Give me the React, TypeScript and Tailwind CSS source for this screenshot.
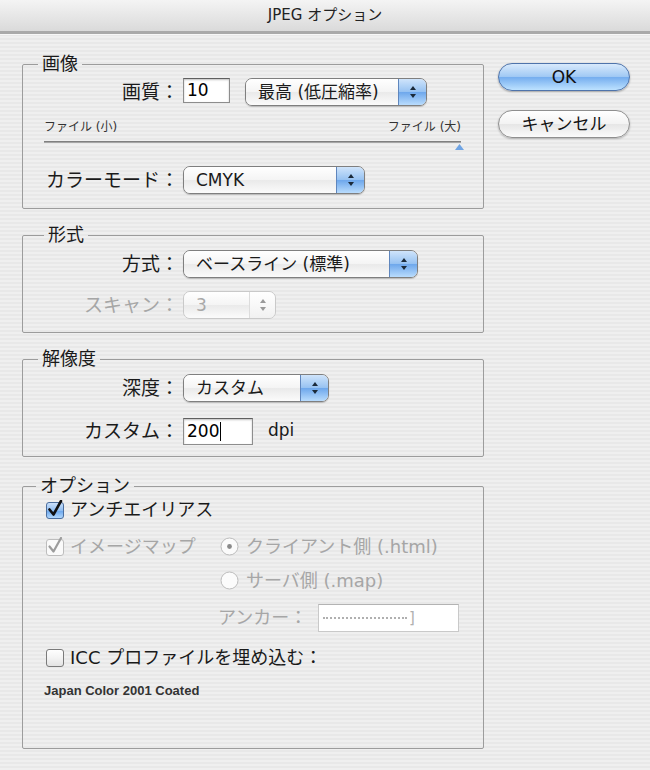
import React from "react";

const font = "font-['DejaVu_Sans','Noto_Sans_CJK_JP',sans-serif]";

function Arrows({ dim }: { dim?: boolean }) {
  const c = dim ? "#9a9a9a" : "#1b2a3a";
  return (
    <svg width="8" height="14" viewBox="0 0 8 14">
      <polygon points="4,1 7,5 1,5" fill={c} />
      <polygon points="1,9 7,9 4,13" fill={c} />
    </svg>
  );
}

function Popup({ text, w, disabled }: { text: string; w: string; disabled?: boolean }) {
  return (
    <div
      className={`flex h-[28px] ${w} overflow-hidden rounded-[7px] border ${
        disabled ? "border-[#c9c9c9] text-[#a8a8a8]" : "border-[#7f7f7f] text-[#1a1a1a] shadow-[0_1px_1px_rgba(0,0,0,0.2)]"
      }`}
    >
      <div className="flex flex-1 items-center bg-[linear-gradient(#ffffff,#f4f4f4_50%,#eaeaea_52%,#fbfbfb)] pl-[12px] text-[17px] leading-none">
        {text}
      </div>
      {disabled ? (
        <div className="flex w-[26px] items-center justify-center border-l border-[#dcdcdc] bg-[linear-gradient(#ffffff,#f1f1f1)]">
          <Arrows dim />
        </div>
      ) : (
        <div className="flex w-[28px] items-center justify-center border-l border-[#5f86bd] bg-[linear-gradient(#cfe4fb,#98c3f2_48%,#6fa8ec_52%,#b9dcfd)]">
          <Arrows />
        </div>
      )}
    </div>
  );
}

function Label({ text, dim }: { text: string; dim?: boolean }) {
  return (
    <div className={`h-[28px] w-[156px] text-right text-[19px] leading-[28px] ${dim ? "text-[#a6a6a6]" : "text-[#1a1a1a]"}`}>
      {text}
    </div>
  );
}

function TextField({ value, w, h, caret }: { value: string; w: string; h: string; caret?: boolean }) {
  return (
    <div
      className={`flex ${w} ${h} items-center border border-[#8d8d8d] border-t-[#5f5f5f] bg-white pl-[3px] text-[17px] leading-none text-black shadow-[inset_0_1px_2px_rgba(0,0,0,0.25)]`}
    >
      {value}
      {caret && <span className="ml-[1px] h-[19px] w-[1px] bg-black" />}
    </div>
  );
}

function CheckBox({ checked, dim }: { checked?: boolean; dim?: boolean }) {
  if (checked && !dim) {
    return (
      <svg width="19" height="19" viewBox="0 0 19 19" className="shrink-0">
        <defs>
          <linearGradient id="cb" x1="0" y1="0" x2="0" y2="1">
            <stop offset="0" stopColor="#cfe3fb" />
            <stop offset="0.5" stopColor="#8fbdf1" />
            <stop offset="0.52" stopColor="#6aa5ec" />
            <stop offset="1" stopColor="#b6dbfd" />
          </linearGradient>
        </defs>
        <rect x="0.5" y="2.5" width="17" height="16" rx="2.5" fill="url(#cb)" stroke="#4b6e9e" />
        <path d="M3.5 9.5 L7.5 14.5 L15 1" fill="none" stroke="#111" strokeWidth="2.6" strokeLinecap="round" strokeLinejoin="round" />
      </svg>
    );
  }
  if (checked && dim) {
    return (
      <svg width="19" height="19" viewBox="0 0 19 19" className="shrink-0">
        <rect x="0.5" y="2.5" width="17" height="16" rx="2.5" fill="#fafafa" stroke="#bdbdbd" />
        <path d="M3.5 9.5 L7.5 14.5 L15 1" fill="none" stroke="#9c9c9c" strokeWidth="2.2" strokeLinecap="round" strokeLinejoin="round" />
      </svg>
    );
  }
  return (
    <svg width="19" height="19" viewBox="0 0 19 19" className="shrink-0">
      <defs>
        <linearGradient id="cu" x1="0" y1="0" x2="0" y2="1">
          <stop offset="0" stopColor="#ffffff" />
          <stop offset="0.5" stopColor="#f3f3f3" />
          <stop offset="1" stopColor="#e2e2e2" />
        </linearGradient>
      </defs>
      <rect x="0.5" y="1.5" width="17" height="17" rx="2.5" fill="url(#cu)" stroke="#7a7a7a" />
    </svg>
  );
}

function Radio({ selected }: { selected?: boolean }) {
  return (
    <svg width="19" height="19" viewBox="0 0 19 19" className="shrink-0">
      <circle cx="9.5" cy="9.5" r="8.5" fill="#fbfbfb" stroke="#bcbcbc" />
      {selected && <circle cx="9.5" cy="9.5" r="2.4" fill="#8a8a8a" />}
    </svg>
  );
}

export default function App() {
  return (
    <div
      className={`h-[770px] w-[650px] overflow-hidden bg-[repeating-linear-gradient(180deg,#efefef_0px,#efefef_2px,#e8e8e8_2px,#e8e8e8_4px)] ${font} text-[#1a1a1a]`}
    >
      {/* Title bar */}
      <div className="h-[31px] bg-[linear-gradient(#f4f4f4,#dadada)] text-center text-[15px] leading-[31px] text-[#222]">
        JPEG オプション
      </div>
      <div className="h-[3px] bg-[#a9a9a9]" />
      <div className="h-[1px] bg-[#f7f7f7]" />

      <div className="flex">
        {/* Left column: groups */}
        <div className="ml-[22px] mt-[19px] flex w-[462px] flex-col">
          {/* 画像 */}
          <fieldset className="h-[155px] rounded-[2px] border border-[#9c9c9c]">
            <legend className="ml-[15px] px-[4px] text-[18px] leading-[20px]">画像</legend>
            <div className="mt-[4px] flex items-start">
              <Label text="画質：" />
              <div className="ml-[4px]">
                <TextField value="10" w="w-[47px]" h="h-[25px]" />
              </div>
              <div className="ml-[15px]">
                <Popup text="最高 (低圧縮率)" w="w-[182px]" />
              </div>
            </div>
            <div className="ml-[21px] mr-[22px] mt-[15px] flex justify-between text-[12px] leading-[13px] text-[#333]">
              <span>ファイル (小)</span>
              <span>ファイル (大)</span>
            </div>
            <div className="ml-[21px] mr-[22px] mt-[7px] h-[2px] bg-[linear-gradient(#6d6d6d,#b9b9b9)]" />
            <div className="mr-[19px] mt-[1px] flex h-[6px] justify-end">
              <svg width="9" height="6" viewBox="0 0 9 6">
                <polygon points="4.5,0 9,6 0,6" fill="#6fa4e4" />
              </svg>
            </div>
            <div className="mt-[16px] flex items-start">
              <Label text="カラーモード：" />
              <div className="ml-[4px]">
                <Popup text="CMYK" w="w-[182px]" />
              </div>
            </div>
          </fieldset>

          {/* 形式 */}
          <fieldset className="mt-[16px] h-[108px] rounded-[2px] border border-[#9c9c9c]">
            <legend className="ml-[21px] px-[4px] text-[18px] leading-[20px]">形式</legend>
            <div className="mt-[5px] flex items-start">
              <Label text="方式：" />
              <div className="ml-[4px]">
                <Popup text="ベースライン (標準)" w="w-[235px]" />
              </div>
            </div>
            <div className="mt-[13px] flex items-start">
              <Label text="スキャン：" dim />
              <div className="ml-[4px]">
                <Popup text="3" w="w-[93px]" disabled />
              </div>
            </div>
          </fieldset>

          {/* 解像度 */}
          <fieldset className="mt-[16px] h-[108px] rounded-[2px] border border-[#9c9c9c]">
            <legend className="ml-[15px] px-[4px] text-[18px] leading-[20px]">解像度</legend>
            <div className="mt-[5px] flex items-start">
              <Label text="深度：" />
              <div className="ml-[4px]">
                <Popup text="カスタム" w="w-[146px]" />
              </div>
            </div>
            <div className="mt-[15px] flex items-center">
              <Label text="カスタム：" />
              <div className="ml-[4px]">
                <TextField value="200" w="w-[70px]" h="h-[27px]" caret />
              </div>
              <span className="ml-[15px] text-[17px]">dpi</span>
            </div>
          </fieldset>

          {/* オプション */}
          <fieldset className="mt-[19px] h-[273px] rounded-[2px] border border-[#9c9c9c]">
            <legend className="ml-[13px] px-[4px] text-[18px] leading-[20px]">オプション</legend>
            <div className="ml-[23px] mt-[4px] flex h-[19px] items-center gap-[5px]">
              <CheckBox checked />
              <span className="text-[18px] leading-none">アンチエイリアス</span>
            </div>
            <div className="mt-[18px] flex h-[19px] items-center">
              <div className="ml-[23px] flex w-[174px] items-center gap-[5px] text-[#a6a6a6]">
                <CheckBox checked dim />
                <span className="text-[18px] leading-none">イメージマップ</span>
              </div>
              <div className="flex items-center gap-[7px] text-[#a6a6a6]">
                <Radio selected />
                <span className="text-[18px] leading-none">クライアント側 (.html)</span>
              </div>
            </div>
            <div className="ml-[197px] mt-[15px] flex h-[19px] items-center gap-[7px] text-[#a6a6a6]">
              <Radio />
              <span className="text-[18px] leading-none">サーバ側 (.map)</span>
            </div>
            <div className="ml-[195px] mt-[14px] flex items-center text-[#a6a6a6]">
              <span className="w-[100px] text-[18px] leading-none">アンカー：</span>
              <div className="flex h-[28px] w-[141px] items-center border border-[#c9c9c9] border-t-[#b3b3b3] bg-white pl-[4px]">
                <span className="h-0 w-[84px] border-t-[2px] border-dotted border-[#b0b0b0]" />
                <span className="ml-[2px] text-[15px] leading-none text-[#b0b0b0]">]</span>
              </div>
            </div>
            <div className="ml-[23px] mt-[16px] flex h-[19px] items-center gap-[5px]">
              <CheckBox />
              <span className="text-[18px] leading-none">ICC プロファイルを埋め込む：</span>
            </div>
            <div className="ml-[21px] mt-[17px] font-['Liberation_Sans',sans-serif] text-[13px] font-bold leading-[14px] text-[#333]">
              Japan Color 2001 Coated
            </div>
          </fieldset>
        </div>

        {/* Right column: buttons */}
        <div className="ml-[14px] mt-[28px] flex flex-col gap-[19px]">
          <button className="h-[28px] w-[132px] rounded-full border border-[#4f74ab] bg-[linear-gradient(#d9eafc,#a1c9f4_48%,#76aeef_52%,#bde2ff)] text-[17px] leading-none text-[#111] shadow-[0_1px_2px_rgba(0,0,0,0.3)]">
            OK
          </button>
          <button className="h-[28px] w-[132px] rounded-full border border-[#8f8f8f] bg-[linear-gradient(#ffffff,#f3f3f3_48%,#e6e6e6_52%,#fbfbfb)] text-[17px] leading-none text-[#111] shadow-[0_1px_2px_rgba(0,0,0,0.25)]">
            キャンセル
          </button>
        </div>
      </div>
    </div>
  );
}
